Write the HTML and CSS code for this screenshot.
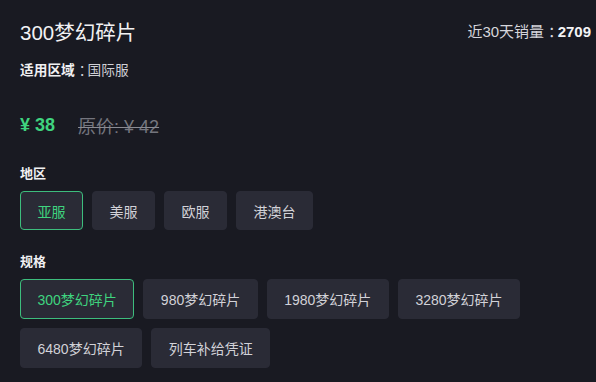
FILE: index.html
```html
<!DOCTYPE html>
<html lang="zh">
<head>
<meta charset="utf-8">
<link rel="stylesheet" href="styles.css">
</head>
<body>
<div class="panel">
  <div class="header">
    <h1 class="title">300梦幻碎片</h1>
    <div class="sales">近30天销量<span class="colon">：</span><b>2709</b></div>
  </div>
  <div class="region"><span class="region-key">适用区域</span><span class="colon">：</span>国际服</div>
  <div class="price">
    <span class="now">¥ 38</span>
    <span class="orig">原价: ¥ 42</span>
  </div>
  <div class="label label-first">地区</div>
  <div class="opts">
    <button class="opt active">亚服</button>
    <button class="opt">美服</button>
    <button class="opt">欧服</button>
    <button class="opt">港澳台</button>
  </div>
  <div class="label">规格</div>
  <div class="opts">
    <button class="opt tall active">300梦幻碎片</button>
    <button class="opt tall">980梦幻碎片</button>
    <button class="opt tall">1980梦幻碎片</button>
    <button class="opt tall">3280梦幻碎片</button>
    <button class="opt tall">6480梦幻碎片</button>
    <button class="opt tall">列车补给凭证</button>
  </div>
</div>
</body>
</html>
```
FILE: styles.css
```css
html, body {
  margin: 0;
  padding: 0;
  background: #191a22;
}
body {
  font-family: "Liberation Sans", "Noto Sans CJK SC", sans-serif;
  color: #e8e8ec;
}
.panel {
  padding: 19px 5px 0 20px;
  width: 571px;
}
.header {
  display: flex;
  justify-content: space-between;
  align-items: center;
  height: 28px;
}
.title {
  margin: 0;
  font-size: 20.5px;
  font-weight: 400;
  line-height: 28px;
  color: #f2f2f4;
}
.sales {
  font-size: 15px;
  color: #d6d6dc;
  line-height: 24px;
  margin-top: -2px;
}
.sales b {
  color: #f4f4f6;
  font-weight: 700;
}
.colon {
  display: inline-block;
  font-feature-settings: "halt";
  margin: 0 2px 0 4px;
}
.region {
  margin-top: 14px;
  font-size: 13.7px;
  line-height: 20px;
  color: #d0d0d6;
}
.region-key {
  color: #f0f0f2;
  font-weight: 700;
}
.price {
  margin-top: 32px;
  height: 24px;
  display: flex;
  align-items: center;
  gap: 23px;
  font-size: 18px;
}
.now {
  color: #3fd47f;
  font-weight: 700;
}
.orig {
  color: #74757e;
  text-decoration: line-through;
  text-decoration-color: #8a8b93;
}
.label {
  margin-top: 22px;
  font-size: 13px;
  line-height: 20px;
  color: #f0f0f2;
  font-weight: 700;
}
.label-first {
  margin-top: 27px;
}
.opts {
  margin-top: 7px;
  display: flex;
  flex-wrap: wrap;
  gap: 9px;
  width: 512px;
}
.opt {
  font-family: inherit;
  height: 39px;
  padding: 0 16.5px;
  font-size: 14px;
  color: #d2d2d8;
  background: #2a2b36;
  border: 1px solid #2a2b36;
  border-radius: 4px;
}
.opt.tall {
  height: 40px;
}
.opt.active {
  color: #3fd47f;
  border-color: #3dbd7d;
}
```
